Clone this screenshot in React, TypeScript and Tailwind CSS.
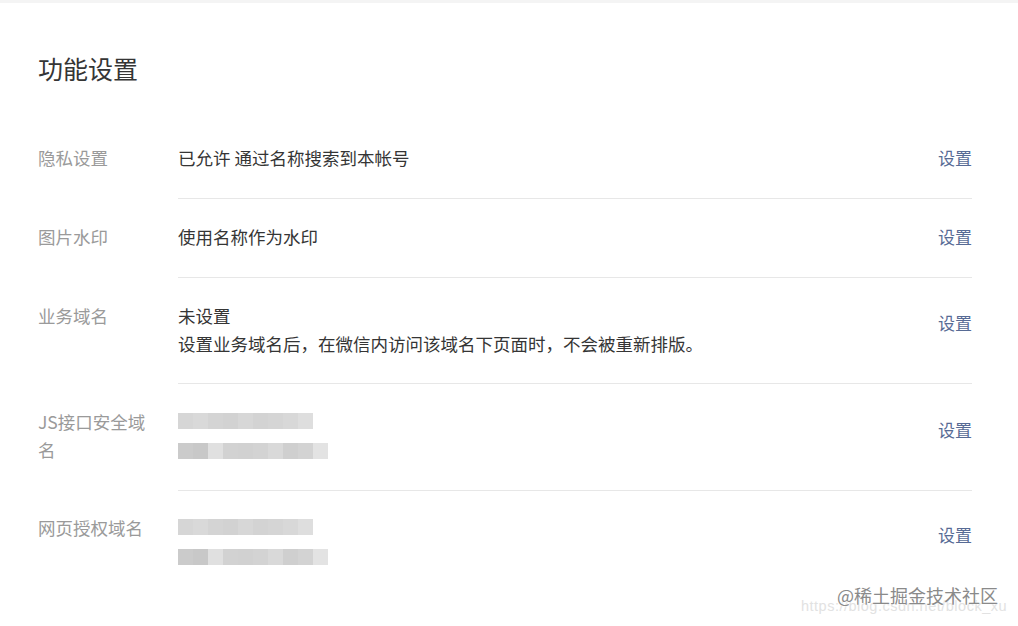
import React from "react";

const bar1 = ["#d6d6d6", "#d9d9d9", "#d4d4d4", "#d2d2d2", "#d7d7d7", "#d3d3d3", "#d5d5d5", "#d8d8d8", "#dedede"];
const bar2 = ["#cbcbcb", "#c8c8c8", "#e0e0e0", "#d2d2d2", "#d1d1d1", "#d3d3d3", "#d9d9d9", "#cfcfcf", "#d3d3d3", "#e3e3e3"];

function Blur() {
  return (
    <div className="flex flex-col gap-[14px] pt-[5px] pb-[5px]">
      <div className="flex h-[16px] w-[135px]">
        {bar1.map((c, i) => (
          <div key={i} className="h-full flex-1" style={{ background: c }} />
        ))}
      </div>
      <div className="flex h-[16px] w-[150px]">
        {bar2.map((c, i) => (
          <div key={i} className="h-full flex-1" style={{ background: c }} />
        ))}
      </div>
    </div>
  );
}

type Row = { label: string; content: React.ReactNode; linkPad: string; rowPad: string; last?: boolean };

export default function App() {
  const rows: Row[] = [
    { label: "隐私设置", content: <div>已允许 通过名称搜索到本帐号</div>, linkPad: "pb-0", rowPad: "pt-[24px] pb-[26px]" },
    { label: "图片水印", content: <div>使用名称作为水印</div>, linkPad: "pb-0", rowPad: "pt-[24px] pb-[26px]" },
    {
      label: "业务域名",
      content: (
        <div>
          <div>未设置</div>
          <div>设置业务域名后，在微信内访问该域名下页面时，不会被重新排版。</div>
        </div>
      ),
      linkPad: "pb-[14px]",
      rowPad: "pt-[24px] pb-[25px]",
    },
    { label: "JS接口安全域名", content: <Blur />, linkPad: "pb-[12px]", rowPad: "pt-[24px] pb-[26px]" },
    { label: "网页授权域名", content: <Blur />, linkPad: "pb-[14px]", rowPad: "pt-[23px] pb-[26px]", last: true },
  ];

  return (
    <div
      className="relative w-[1018px] h-[626px] overflow-hidden bg-white text-[#353535]"
      style={{ fontFamily: '"Noto Sans CJK SC", "Noto Sans", sans-serif' }}
    >
      <div className="h-[3px] bg-[#f4f4f4]" />
      <div className="pl-[38px] pr-[46px]">
        <h1 className="mt-[47px] mb-[34px] text-[25px] leading-[36px] font-normal text-[#353535]">功能设置</h1>
        {rows.map((r, i) => (
          <div key={i} className="flex">
            <div className={`w-[120px] mr-[20px] ${r.rowPad.split(" ")[0]} text-[17.5px] leading-[28px] text-[#9a9a9a] break-all`}>
              {r.label}
            </div>
            <div
              className={`flex flex-1 items-center ${r.rowPad} ${r.last ? "" : "border-b border-[#e7e7e7]"}`}
            >
              <div className="flex-1 text-[17.5px] leading-[28px] text-[#353535]">{r.content}</div>
              <div className={`text-[17px] leading-[28px] text-[#576b95] ${r.linkPad}`}>设置</div>
            </div>
          </div>
        ))}
      </div>
      <div
        className="absolute left-[801px] top-[598px] text-[14.5px] leading-[16px] text-[#e2e2e2] tracking-[0.5px]"
        style={{ fontFamily: '"Liberation Sans", sans-serif' }}
      >
        https://blog.csdn.net/block_xu
      </div>
      <div
        className="absolute left-[837px] top-[584px] text-[18px] leading-[22px] text-[#8a8a8a]"
        style={{ textShadow: "0 0 2px #fff, 0 0 2px #fff" }}
      >
        @稀土掘金技术社区
      </div>
    </div>
  );
}
